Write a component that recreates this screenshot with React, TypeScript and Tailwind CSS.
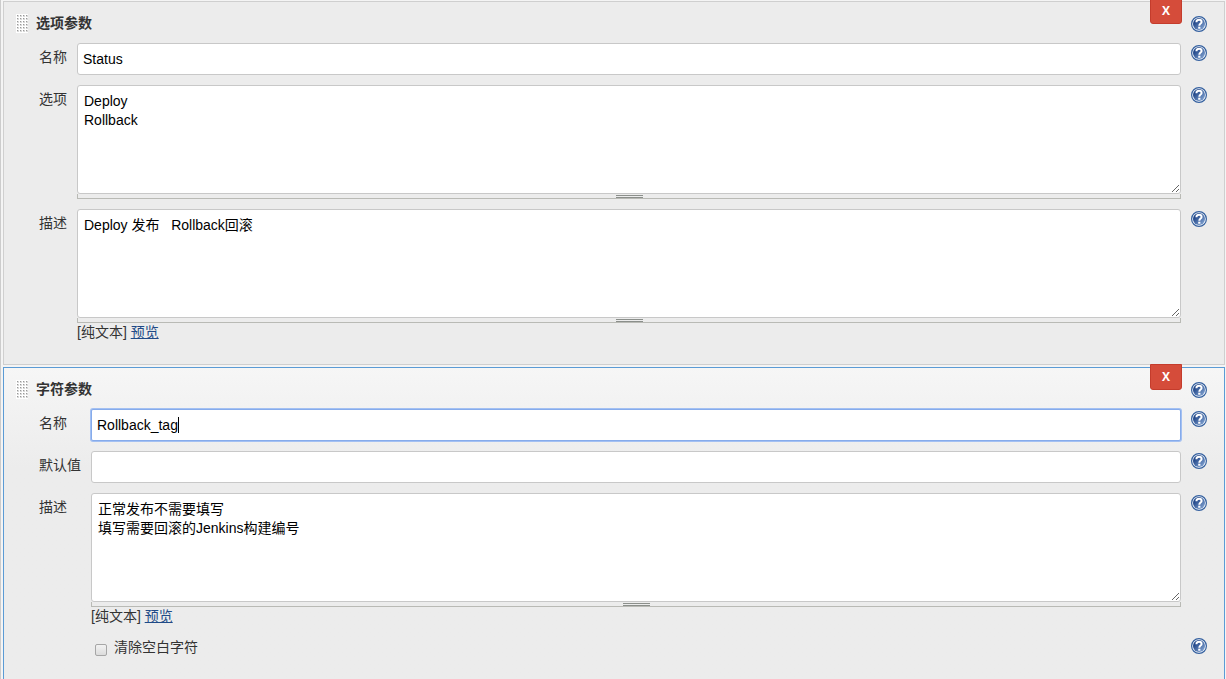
import { useState } from 'react';
import type { ReactNode } from 'react';

const fieldClass =
  'block w-full rounded-[3px] border border-[#c8c8c8] bg-white text-black outline-none';

const HelpButton = ({ topic }: { topic: string }) => (
  <button type="button" aria-label={`帮助: ${topic}`} className="block size-4 shrink-0 cursor-pointer">
    <svg viewBox="0 0 16 16" className="block size-4">
      <defs>
        <linearGradient id="help-disc" x1="0" y1="0" x2="1" y2="1">
          <stop offset="0.25" stopColor="#23488a" />
          <stop offset="1" stopColor="#8fb0dc" />
        </linearGradient>
      </defs>
      <circle cx="8" cy="8" r="7.4" fill="#f4f7fb" stroke="#34609f" strokeWidth="1.2" />
      <circle cx="8" cy="8" r="6" fill="url(#help-disc)" />
      <path
        d="M5.4 6.2C5.4 4.5 6.5 3.8 8 3.8C9.6 3.8 10.6 4.6 10.6 5.9C10.6 7.6 8.3 7.6 8.3 9.8"
        fill="none"
        stroke="#fff"
        strokeWidth="2"
      />
      <rect x="7.2" y="10.7" width="2.2" height="2" fill="#fff" />
    </svg>
  </button>
);

const DragHandle = () => (
  <svg viewBox="0 0 12 19" className="h-[19px] w-3 shrink-0 cursor-move">
    <defs>
      <pattern id="grip" width="3" height="3" patternUnits="userSpaceOnUse">
        <rect width="3" height="3" fill="#fff" />
        <rect x="1" y="1" width="2" height="2" fill="#d8d8d8" />
        <rect x="1" y="1" width="1" height="1" fill="#999" />
      </pattern>
    </defs>
    <rect width="12" height="19" fill="url(#grip)" />
  </svg>
);

interface ParameterBoxProps {
  title: string;
  active?: boolean;
  children: ReactNode;
}

const ParameterBox = ({ title, active, children }: ParameterBoxProps) => (
  <section
    className={
      active
        ? 'relative grow border border-b-0 border-[#5b9bd5] bg-[#ececec] bg-linear-to-b from-[#f6f6f6] to-[#ececec] to-[100px] pr-[17px] pb-6 pl-3'
        : 'relative border border-[#cfcfcf] bg-[#ececec] pr-[17px] pb-[22px] pl-3'
    }
  >
    {/* Delete button hangs over the top border */}
    <button
      type="button"
      aria-label={`删除 ${title}`}
      className="absolute -top-1 right-[42px] h-[26px] w-8 cursor-pointer rounded-b-[3px] border border-[#c43c2c] bg-[#d54c3a] font-['Open_Sans',sans-serif] text-xs leading-6 font-bold text-white"
    >
      X
    </button>
    <header className="flex h-[41px] items-start pt-3">
      <DragHandle />
      <h2 className="ml-2 grow text-sm leading-[18px] font-bold">{title}</h2>
      <div className="pt-0.5">
        <HelpButton topic={title} />
      </div>
    </header>
    <div className="ml-[23px] grid grid-cols-[auto_minmax(0,1fr)_auto] gap-2.5">{children}</div>
  </section>
);

interface RowProps {
  id: string;
  label: string;
  children: ReactNode;
}

const Row = ({ id, label, children }: RowProps) => (
  <>
    <label htmlFor={id} className="pt-1 leading-5 whitespace-nowrap">
      {label}
    </label>
    <div className="min-w-0">{children}</div>
    <div className="pt-0.5">
      <HelpButton topic={label} />
    </div>
  </>
);

interface TextFieldProps {
  id: string;
  initial?: string;
  focused?: boolean;
}

const TextField = ({ id, initial = '', focused }: TextFieldProps) => {
  const [value, setValue] = useState(initial);

  return (
    <div className="relative">
      <input
        id={id}
        type="text"
        value={value}
        onChange={(e) => setValue(e.target.value)}
        className={
          focused
            ? 'block h-8 w-full rounded-[2px] border border-[#86abeb] bg-white px-[5px] text-black ring-1 ring-[#a3c0f2] outline-none'
            : `${fieldClass} h-8 px-[5px]`
        }
      />
      {/* Text cursor */}
      {focused && <span className="absolute top-2 left-[87px] h-4 w-px bg-black" />}
    </div>
  );
};

const TextArea = ({ id, initial = '' }: { id: string; initial?: string }) => {
  const [value, setValue] = useState(initial);

  return (
    <div>
      <textarea
        id={id}
        value={value}
        onChange={(e) => setValue(e.target.value)}
        className={`${fieldClass} h-[109px] resize-y p-1.5 leading-[19px]`}
      />
      <div className="flex h-[5px] cursor-ns-resize justify-center border-x border-b border-[#b9bab5]">
        <div className="mt-px h-[3px] w-[27px] border-y border-[#8b8f8b]" />
      </div>
    </div>
  );
};

const FormatLine = () => (
  <div className="leading-[19px]">
    [纯文本]{' '}
    <a href="#preview" className="text-[#204a87] underline">
      预览
    </a>
  </div>
);

export default function App() {
  const [trim, setTrim] = useState(false);

  return (
    <div className="flex min-h-screen flex-col gap-0.5 border-l border-[#ccc] bg-[#f4f4f4] pt-px pr-px pl-0.5 font-['Liberation_Sans','Noto_Sans_CJK_SC',sans-serif] text-sm text-[#333]">
      <ParameterBox title="选项参数">
        <Row id="choice-name" label="名称">
          <TextField id="choice-name" initial="Status" />
        </Row>
        <Row id="choice-options" label="选项">
          <TextArea id="choice-options" initial={'Deploy\nRollback'} />
        </Row>
        <Row id="choice-desc" label="描述">
          <TextArea id="choice-desc" initial={'Deploy 发布   Rollback回滚'} />
          <FormatLine />
        </Row>
      </ParameterBox>

      <ParameterBox title="字符参数" active>
        <Row id="string-name" label="名称">
          <TextField id="string-name" initial="Rollback_tag" focused />
        </Row>
        <Row id="string-default" label="默认值">
          <TextField id="string-default" />
        </Row>
        <Row id="string-desc" label="描述">
          <TextArea id="string-desc" initial={'正常发布不需要填写\n填写需要回滚的Jenkins构建编号'} />
          <FormatLine />
        </Row>
        <div className="col-start-2 flex items-start pl-1">
          <input
            id="string-trim"
            type="checkbox"
            checked={trim}
            onChange={(e) => setTrim(e.target.checked)}
            className="mt-2 size-3 appearance-none rounded-[2px] border border-[#a6a6a6] bg-linear-to-b from-[#f2f2f2] to-[#dcdcdc] checked:bg-none checked:bg-[#204a87]"
          />
          <label htmlFor="string-trim" className="ml-[7px] leading-[22px]">
            清除空白字符
          </label>
        </div>
        <div className="pt-0.5">
          <HelpButton topic="清除空白字符" />
        </div>
      </ParameterBox>
    </div>
  );
}
